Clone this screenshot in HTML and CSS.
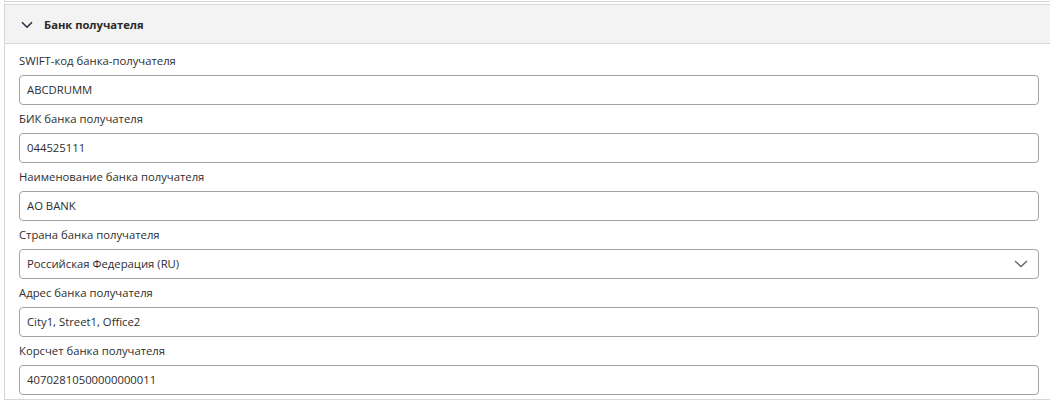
FILE: index.html
```html
<!DOCTYPE html>
<html lang="ru">
<head>
    <meta charset="UTF-8">
    <title>Банк получателя</title>
    <link rel="stylesheet" href="styles.css">
</head>
<body>

<div class="prev-section"></div>

<section class="panel">
    <div class="panel-head">
        <svg class="head-chevron" width="12" height="8" viewBox="0 0 12 8">
            <path d="M1 1.2 L6 6.2 L11 1.2" fill="none" stroke="#27313d" stroke-width="1.6"/>
        </svg>
        <span class="panel-title">Банк получателя</span>
    </div>

    <div class="panel-body">
        <div class="field">
            <label class="field-label">SWIFT-код банка-получателя</label>
            <div class="field-input">ABCDRUMM</div>
        </div>
        <div class="field">
            <label class="field-label">БИК банка получателя</label>
            <div class="field-input">044525111</div>
        </div>
        <div class="field">
            <label class="field-label">Наименование банка получателя</label>
            <div class="field-input">АО BANK</div>
        </div>
        <div class="field">
            <label class="field-label">Страна банка получателя</label>
            <div class="field-input field-select">
                <span>Российская Федерация (RU)</span>
                <svg class="select-chevron" width="14" height="8" viewBox="0 0 14 8">
                    <path d="M1 1 L7 6.6 L13 1" fill="none" stroke="#5d6470" stroke-width="1.3"/>
                </svg>
            </div>
        </div>
        <div class="field">
            <label class="field-label">Адрес банка получателя</label>
            <div class="field-input">City1, Street1, Office2</div>
        </div>
        <div class="field">
            <label class="field-label">Корсчет банка получателя</label>
            <div class="field-input">40702810500000000011</div>
        </div>
    </div>
</section>

</body>
</html>
```

FILE: styles.css
```css
body {
    margin: 0;
    width: 1050px;
    height: 401px;
    overflow: hidden;
    background: #fff;
    font-family: "Open Sans", "Noto Sans", Arial, sans-serif;
    font-size: 11.3px;
    color: #2e2e2e;
}

.prev-section {
    margin-left: 4px;
    height: 1px;
    border-left: 1px solid #d6d6d6;
    border-bottom: 1px solid #d6d6d6;
    width: 1060px;
}

.panel {
    margin: 2px 0 0 4px;
    width: 1064px;
    border: 1px solid #d6d6d6;
    border-right: none;
}

.panel-head {
    display: flex;
    align-items: center;
    height: 38px;
    padding-left: 16px;
    background: #f3f3f3;
    border-bottom: 1px solid #d6d6d6;
}

.head-chevron {
    margin-right: 11px;
    margin-top: 1px;
}

.panel-title {
    font-weight: 700;
    font-size: 11.2px;
    color: #2a2a2a;
}

.panel-body {
    padding: 7px 0 0 14px;
    width: 1020px;
}

.field {
    display: flex;
    flex-direction: column;
    gap: 4px;
    margin-bottom: 4px;
}

.field-label {
    line-height: 20px;
    height: 20px;
}

.field-input {
    box-sizing: border-box;
    height: 30px;
    line-height: 28px;
    padding: 0 7px;
    border: 1px solid #a3a3a3;
    border-radius: 4px;
    background: #fff;
}

.field-select {
    display: flex;
    justify-content: space-between;
    align-items: center;
    padding-right: 10px;
}
```
